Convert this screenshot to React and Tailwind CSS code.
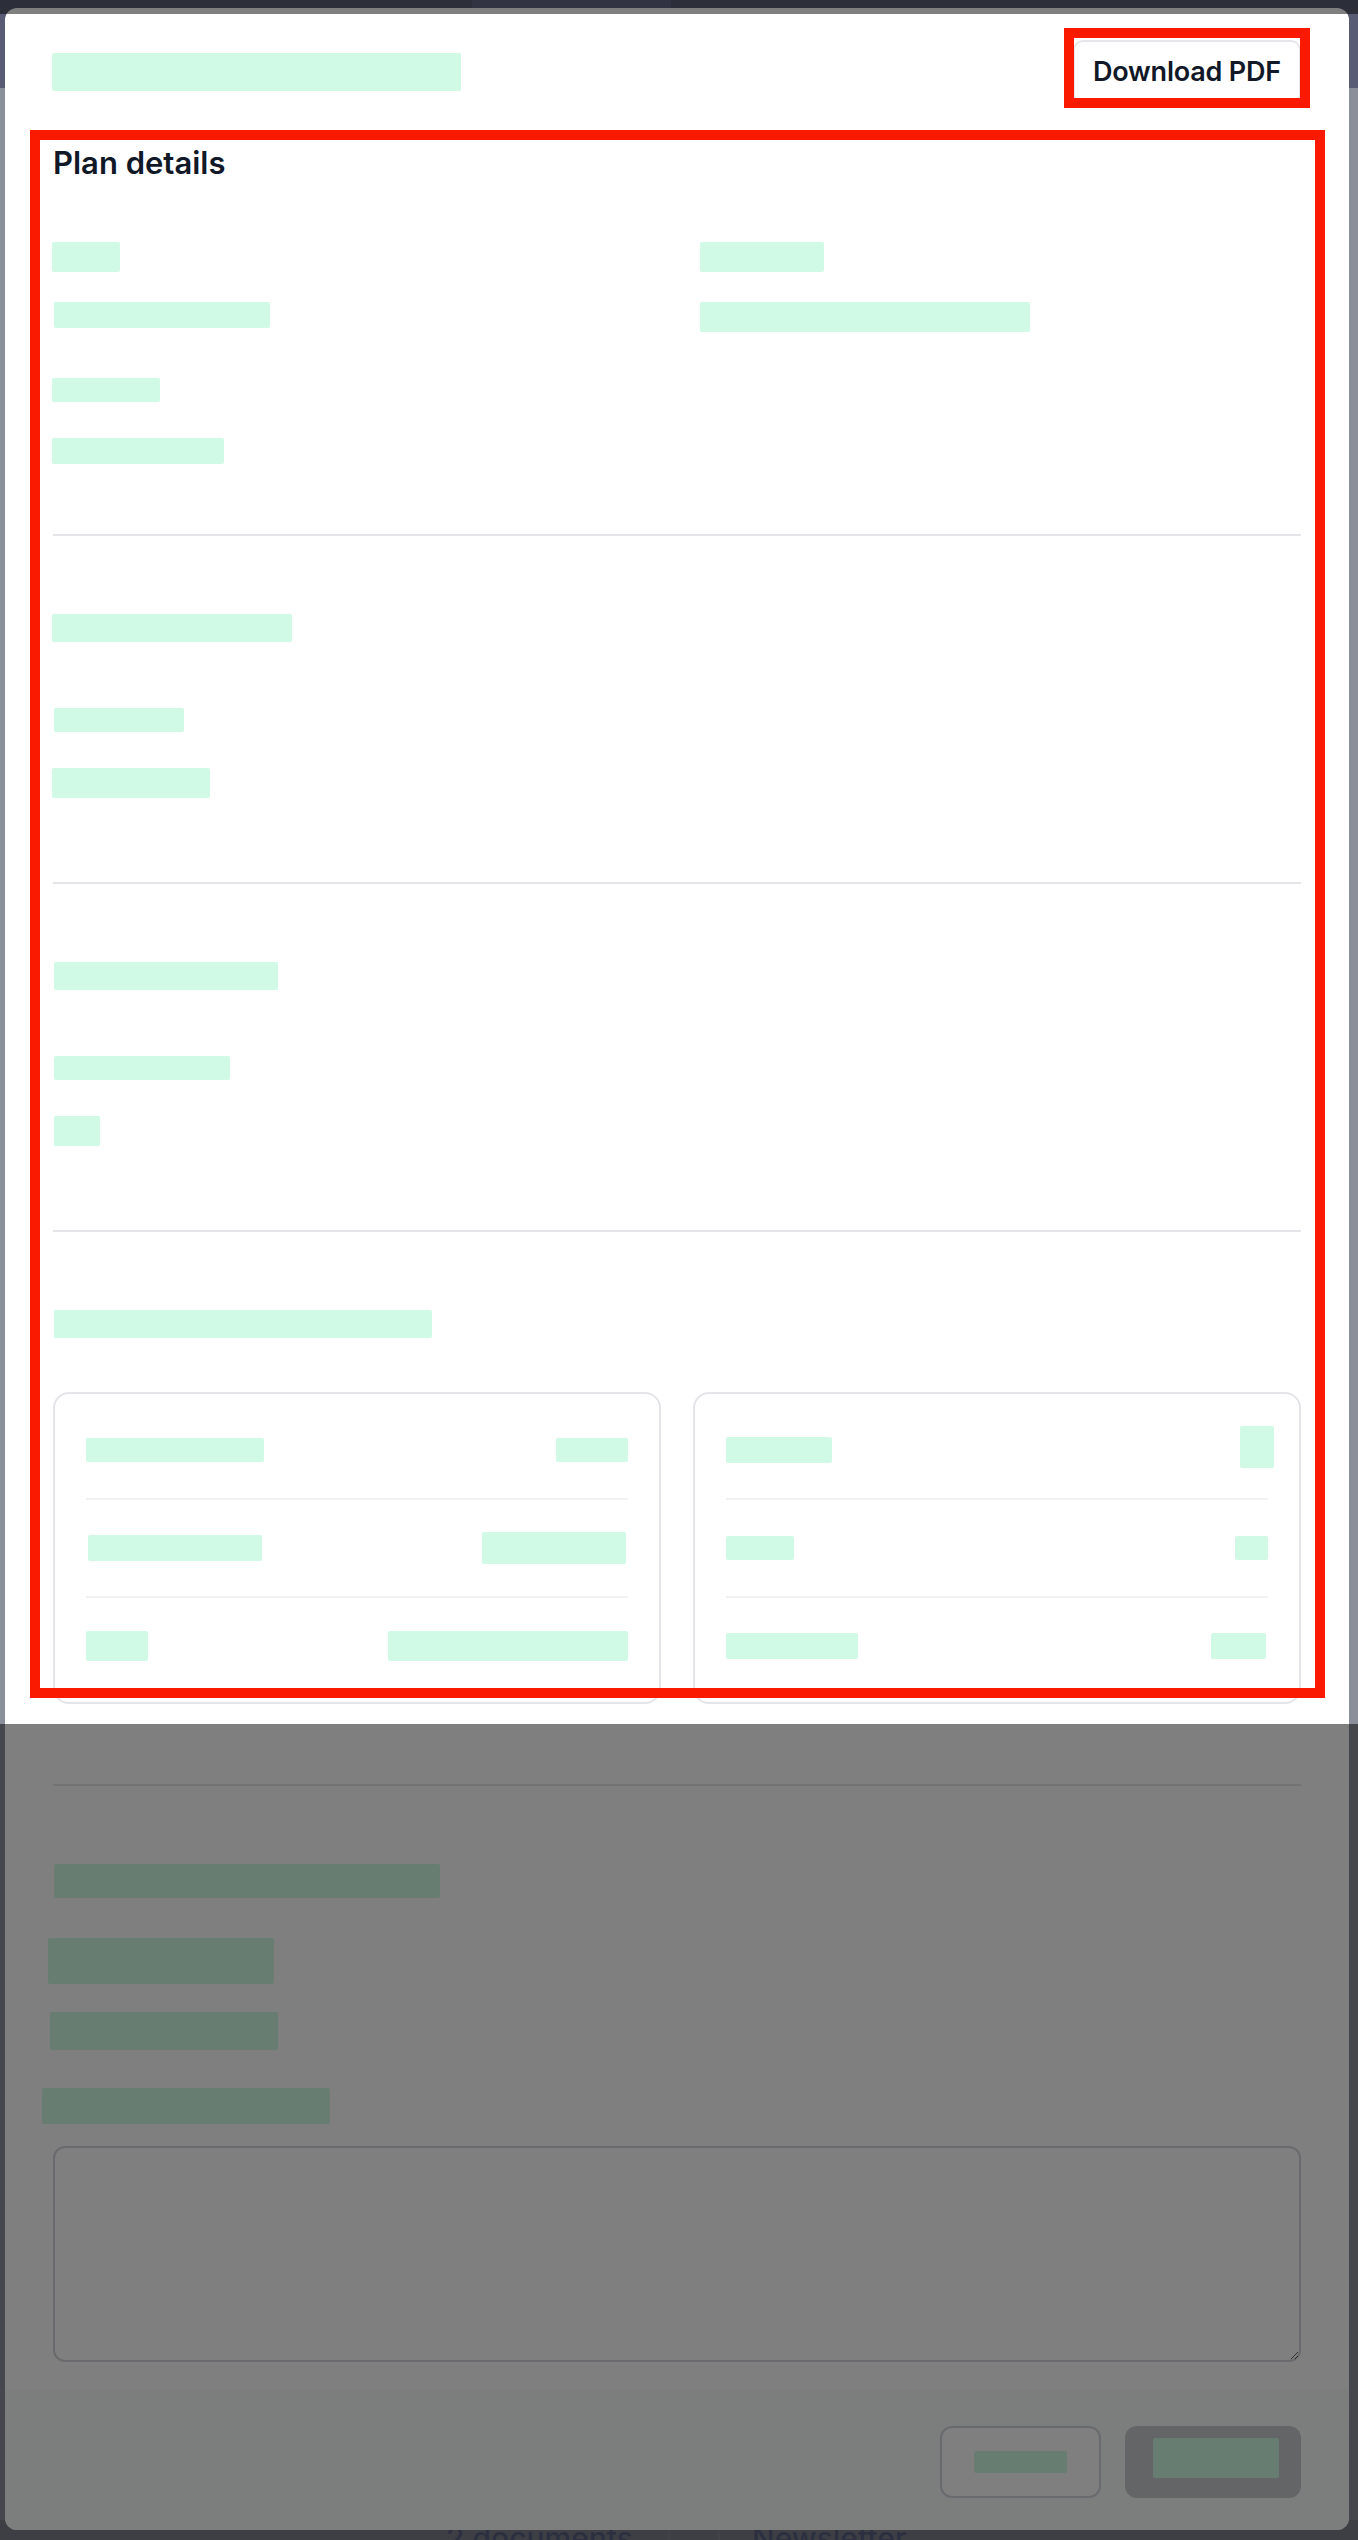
import React from "react";

const Bar = ({ className = "" }) => (
  <div className={`shrink-0 rounded-[2px] bg-emerald-100 ${className}`} />
);

const Divider = ({ className = "" }) => (
  <div className={`h-[2px] w-full bg-[#e4e4e9] ${className}`} />
);

function Card({ rows }) {
  return (
    <div className="rounded-[16px] border-2 border-[#e4e4e9] px-[31px] py-[8px]">
      <div className="flex flex-col">
        {rows.map((r, i) => (
          <React.Fragment key={i}>
            {i > 0 && <div className="h-[2px] w-full bg-[#f2f2f4]" />}
            <div className="flex h-[96px] items-center justify-between">
              <Bar className={r[0]} />
              <Bar className={r[1]} />
            </div>
          </React.Fragment>
        ))}
      </div>
    </div>
  );
}

export default function App() {
  const card1 = [
    ["w-[178px] h-[24px]", "w-[72px] h-[24px]"],
    ["w-[174px] h-[26px] ml-[2px]", "w-[144px] h-[32px] mr-[2px]"],
    ["w-[62px] h-[30px]", "w-[240px] h-[30px]"],
  ];
  const card2 = [
    ["w-[106px] h-[26px]", "w-[34px] h-[42px] -mr-[6px] -mt-[6px]"],
    ["w-[68px] h-[24px]", "w-[33px] h-[24px]"],
    ["w-[132px] h-[26px]", "w-[55px] h-[26px] mr-[2px]"],
  ];

  return (
    <div
      className="relative h-[2540px] w-[1358px] overflow-hidden bg-[#8a8f99]"
      style={{ fontFamily: "Inter, 'Noto Sans', 'Liberation Sans', sans-serif" }}
    >
      {/* page behind the dialog */}
      <div className="flex h-full flex-col">
        <div className="flex h-[88px] bg-[#585c74]">
          <div className="ml-[472px] h-full w-[199px] bg-[#626785]" />
        </div>
        <div className="flex-1" />
        <div className="flex h-[20px] items-start bg-[#7b7f89] text-[30px] leading-[36px] font-medium text-[#585f80]">
          <span className="ml-[446px] whitespace-nowrap">2 documents</span>
          <div className="ml-[35px] h-[36px] w-[2px] bg-[#838791]" />
          <div className="ml-[48px] h-[36px] w-[2px] bg-[#838791]" />
          <span className="ml-[32px] whitespace-nowrap">Newsletter</span>
        </div>
      </div>

      {/* dialog */}
      <div className="absolute left-[5px] top-[8px] flex h-[2522px] w-[1344px] flex-col overflow-hidden rounded-[12px] bg-white">
        {/* header */}
        <div className="flex items-center justify-between px-[48px] pt-[32px]">
          <Bar className="-ml-px w-[409px] h-[38px]" />
          <button className="flex h-[64px] w-[228px] items-center justify-center rounded-[10px] border-2 border-[#e5e7eb] bg-white text-[27px] font-semibold tracking-[-0.2px] text-[#111827]">
            Download PDF
          </button>
        </div>

        {/* body */}
        <div className="flex flex-col px-[48px]">
          <h2 className="mt-[41px] text-[31px] leading-[36px] font-semibold text-[#111827]">
            Plan details
          </h2>

          <div className="mt-[61px] grid grid-cols-2 gap-x-[48px]">
            <div className="flex flex-col items-start">
              <Bar className="-ml-px w-[68px] h-[30px]" />
              <Bar className="mt-[30px] ml-px w-[216px] h-[26px]" />
              <Bar className="mt-[50px] -ml-px w-[108px] h-[24px]" />
              <Bar className="mt-[36px] -ml-px w-[172px] h-[26px]" />
            </div>
            <div className="flex flex-col items-start">
              <Bar className="-ml-px w-[124px] h-[30px]" />
              <Bar className="mt-[30px] -ml-px w-[330px] h-[30px]" />
            </div>
          </div>

          <Divider className="mt-[70px]" />

          <div className="flex flex-col items-start">
            <Bar className="mt-[78px] -ml-px w-[240px] h-[28px]" />
            <Bar className="mt-[66px] ml-px w-[130px] h-[24px]" />
            <Bar className="mt-[36px] -ml-px w-[158px] h-[30px]" />
          </div>

          <Divider className="mt-[84px]" />

          <div className="flex flex-col items-start">
            <Bar className="mt-[78px] ml-px w-[224px] h-[28px]" />
            <Bar className="mt-[66px] ml-px w-[176px] h-[24px]" />
            <Bar className="mt-[36px] ml-px w-[46px] h-[30px]" />
          </div>

          <Divider className="mt-[84px]" />

          <Bar className="mt-[78px] ml-px w-[378px] h-[28px]" />

          <div className="mt-[54px] grid grid-cols-2 gap-x-[32px]">
            <Card rows={card1} />
            <Card rows={card2} />
          </div>

          <Divider className="mt-[80px]" />

          <div className="flex flex-col items-start">
            <Bar className="mt-[78px] ml-px w-[386px] h-[34px]" />
            <Bar className="mt-[40px] -ml-[5px] w-[226px] h-[46px]" />
            <Bar className="mt-[28px] -ml-[3px] w-[228px] h-[38px]" />
            <Bar className="mt-[38px] -ml-[11px] w-[288px] h-[36px]" />
          </div>

          <textarea
            className="mt-[22px] block h-[216px] w-full rounded-[12px] border-2 border-[#d4d4dc] bg-white outline-none"
            defaultValue=""
          />
        </div>

        {/* footer */}
        <div className="mt-auto flex h-[140px] items-start justify-end gap-[24px] bg-[#f9fafb] px-[48px] pt-[36px]">
          <button className="flex h-[72px] w-[161px] items-center justify-center rounded-[12px] border-2 border-[#d1d5db] bg-white">
            <Bar className="w-[93px] h-[22px]" />
          </button>
          <button className="flex h-[72px] w-[176px] items-center justify-center rounded-[12px] bg-[#c9cacc]">
            <Bar className="w-[126px] h-[40px] -mt-[8px] ml-[6px]" />
          </button>
        </div>
      </div>

      {/* highlight dimming */}
      <div className="absolute inset-x-0 top-0 h-[14px] bg-black/50" />
      <div className="absolute inset-x-0 top-[1724px] bottom-0 bg-black/50" />

      {/* annotation boxes */}
      <div className="absolute left-[1064px] top-[28px] h-[80px] w-[246px] border-[10px] border-[#f91a01]" />
      <div className="absolute left-[30px] top-[130px] h-[1568px] w-[1295px] border-[10px] border-[#f91a01]" />
    </div>
  );
}
